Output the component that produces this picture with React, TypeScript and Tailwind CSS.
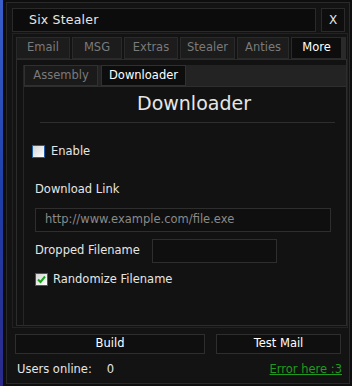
import { useState } from "react";

const tabs = [
  { name: "Email", w: "w-[54px]" },
  { name: "MSG", w: "w-[50px]" },
  { name: "Extras", w: "w-[54px]" },
  { name: "Stealer", w: "w-[55px]" },
  { name: "Anties", w: "w-[52px]" },
  { name: "More", w: "w-[51px]" },
];

function Check({ checked }: { checked: boolean }) {
  return (
    <span className="w-[13px] h-[13px] border border-[#1c5fa8] bg-gradient-to-br from-[#d4d4d4] to-white flex items-center justify-center shrink-0">
      {checked && (
        <svg width="9" height="9" viewBox="0 0 9 9">
          <path d="M1 4.5 L3.5 7 L8 1.5" stroke="#1ba31b" strokeWidth="2" fill="none" />
        </svg>
      )}
    </span>
  );
}

export default function App() {
  const [tab, setTab] = useState("More");
  const [sub, setSub] = useState("Downloader");
  const [enable, setEnable] = useState(false);
  const [rand, setRand] = useState(true);

  return (
    <div
      className="w-[352px] h-[386px] flex bg-[#0b0b0b] text-[#e6e6e6] overflow-hidden"
      style={{ fontFamily: '"DejaVu Sans", Verdana, sans-serif' }}
    >
      <div className="w-[3px] bg-gradient-to-b from-[#3a5fc9] via-[#1e3fa8] to-[#2a2a8a]" />
      <div className="flex-1 flex bg-[#0e0e0e] pl-[3px] pr-[2px] pt-[2px] pb-[2px]">
        <div className="flex-1 flex flex-col bg-[#131313] border border-[#2a2a2a] pl-[5px] pr-[1px] pt-[5px]">
          {/* TITLE */}
          <div className="flex gap-[5px] h-[24px] mr-[3px]">
            <div className="flex-1 bg-[#0c0c0c] border border-[#2a2a2a] flex items-center pl-[16px] text-[12.5px] tracking-[0.2px]">
              Six Stealer
            </div>
            <div className="w-[24px] bg-[#0e0e0e] border border-[#2a2a2a] flex items-center justify-center text-[12px]">
              X
            </div>
          </div>

          {/* TAB CONTROL */}
          <div className="mt-[1px] border border-[#222222] pl-[3px] pt-[3px] pb-[1px]">
            <div className="flex gap-[2px] h-[22px]">
              {tabs.map((t) => (
                <button
                  key={t.name}
                  onClick={() => setTab(t.name)}
                  className={`${t.w} h-full border border-[#2a2a2a] text-[11.5px] flex items-center justify-center ${
                    tab === t.name ? "bg-[#0d0d0d] text-white" : "bg-[#1c1c1c] text-[#7a7a7a]"
                  }`}
                >
                  {t.name}
                </button>
              ))}
              <div className="w-[4px] -ml-[2px] bg-[#2a2a2a]" />
            </div>

            {/* PANEL */}
            <div className="border border-[#2c2c2c] bg-[#121212] h-[267px] flex pl-[6px] pt-[5px]">
              <div className="flex-1 flex flex-col border-l border-[#262626]">
                <div className="flex gap-[3px] h-[22px] bg-[#232323] border-b border-[#2e2e2e]">
                  <button
                    onClick={() => setSub("Assembly")}
                    className={`w-[74px] text-[11.5px] border border-[#303030] ${
                      sub === "Assembly" ? "bg-[#0d0d0d] text-white" : "bg-[#1a1a1a] text-[#7a7a7a]"
                    }`}
                  >
                    Assembly
                  </button>
                  <button
                    onClick={() => setSub("Downloader")}
                    className={`w-[85px] text-[11.5px] border border-[#303030] ${
                      sub === "Downloader" ? "bg-[#0d0d0d] text-white" : "bg-[#1a1a1a] text-[#7a7a7a]"
                    }`}
                  >
                    Downloader
                  </button>
                </div>

                <div className="text-center text-[19px] leading-[22px] mt-[5px] pl-[18px]">Downloader</div>
                <div className="ml-[16px] mr-[11px] mt-[8px] h-px bg-[#2e2e2e]" />

                <label
                  className="mt-[22px] ml-[8px] flex items-center gap-[6px] text-[11.5px] leading-[13px] cursor-pointer"
                  onClick={() => setEnable(!enable)}
                >
                  <Check checked={enable} />
                  Enable
                </label>

                <div className="mt-[24px] ml-[11px] text-[11.5px] leading-[14px]">Download Link</div>
                <div className="mt-[12px] ml-[11px] w-[296px] h-[24px] bg-[#0f0f0f] border border-[#2e2e2e] flex items-center pl-[9px] text-[11.5px] text-[#8a8a8a]">
                  http://www.example.com/file.exe
                </div>

                <div className="mt-[7px] ml-[11px] flex items-center text-[11.5px]">
                  <span className="w-[117px]">Dropped Filename</span>
                  <div className="w-[125px] h-[24px] bg-[#0f0f0f] border border-[#2e2e2e]" />
                </div>

                <label
                  className="mt-[10px] ml-[11px] flex items-center gap-[5px] text-[11.5px] leading-[13px] cursor-pointer"
                  onClick={() => setRand(!rand)}
                >
                  <Check checked={rand} />
                  Randomize Filename
                </label>
              </div>
            </div>
          </div>

          {/* BUTTONS */}
          <div className="mt-[6px] flex gap-[11px] ml-[3px] h-[20px]">
            <button className="w-[190px] bg-[#0f0f0f] border border-[#2e2e2e] text-[11.5px] text-white">Build</button>
            <button className="w-[125px] bg-[#0f0f0f] border border-[#2e2e2e] text-[11.5px] text-white">Test Mail</button>
          </div>

          <div className="mt-[8px] flex items-center pl-[5px] pr-[6px] text-[11.5px] leading-[14px]">
            <span>Users online:</span>
            <span className="ml-[15px]">0</span>
            <span className="ml-auto text-[#1f9a1f] underline">Error here :3</span>
          </div>
        </div>
      </div>
    </div>
  );
}
